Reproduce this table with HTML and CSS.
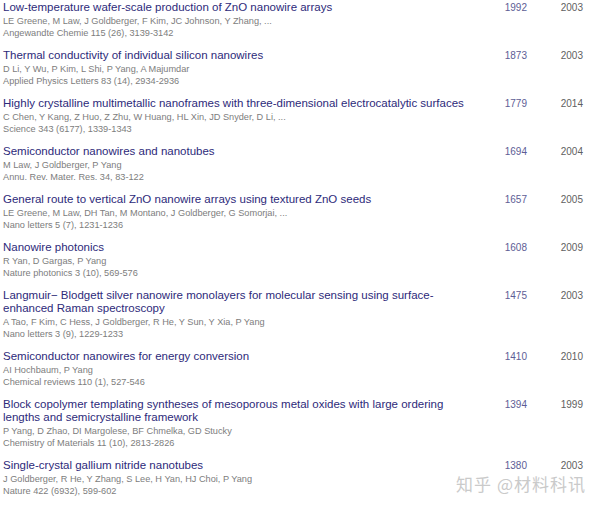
FILE: index.html
```html
<!DOCTYPE html>
<html lang="en">
<head>
    <meta charset="UTF-8">
    <title>Articles</title>
    <link rel="stylesheet" href="styles.css">
</head>
<body>
    <div class="article-list">
        <div class="row">
            <div class="item">
                <a href="#" class="title">Low-temperature wafer-scale production of ZnO nanowire arrays</a>
                <div class="meta">LE Greene, M Law, J Goldberger, F Kim, JC Johnson, Y Zhang, ...</div>
                <div class="meta">Angewandte Chemie 115 (26), 3139-3142</div>
            </div>
            <a href="#" class="cites">1992</a>
            <div class="year">2003</div>
        </div>
        <div class="row">
            <div class="item">
                <a href="#" class="title">Thermal conductivity of individual silicon nanowires</a>
                <div class="meta">D Li, Y Wu, P Kim, L Shi, P Yang, A Majumdar</div>
                <div class="meta">Applied Physics Letters 83 (14), 2934-2936</div>
            </div>
            <a href="#" class="cites">1873</a>
            <div class="year">2003</div>
        </div>
        <div class="row">
            <div class="item">
                <a href="#" class="title">Highly crystalline multimetallic nanoframes with three-dimensional electrocatalytic surfaces</a>
                <div class="meta">C Chen, Y Kang, Z Huo, Z Zhu, W Huang, HL Xin, JD Snyder, D Li, ...</div>
                <div class="meta">Science 343 (6177), 1339-1343</div>
            </div>
            <a href="#" class="cites">1779</a>
            <div class="year">2014</div>
        </div>
        <div class="row">
            <div class="item">
                <a href="#" class="title">Semiconductor nanowires and nanotubes</a>
                <div class="meta">M Law, J Goldberger, P Yang</div>
                <div class="meta">Annu. Rev. Mater. Res. 34, 83-122</div>
            </div>
            <a href="#" class="cites">1694</a>
            <div class="year">2004</div>
        </div>
        <div class="row">
            <div class="item">
                <a href="#" class="title">General route to vertical ZnO nanowire arrays using textured ZnO seeds</a>
                <div class="meta">LE Greene, M Law, DH Tan, M Montano, J Goldberger, G Somorjai, ...</div>
                <div class="meta">Nano letters 5 (7), 1231-1236</div>
            </div>
            <a href="#" class="cites">1657</a>
            <div class="year">2005</div>
        </div>
        <div class="row">
            <div class="item">
                <a href="#" class="title">Nanowire photonics</a>
                <div class="meta">R Yan, D Gargas, P Yang</div>
                <div class="meta">Nature photonics 3 (10), 569-576</div>
            </div>
            <a href="#" class="cites">1608</a>
            <div class="year">2009</div>
        </div>
        <div class="row">
            <div class="item">
                <a href="#" class="title">Langmuir− Blodgett silver nanowire monolayers for molecular sensing using surface-enhanced Raman spectroscopy</a>
                <div class="meta">A Tao, F Kim, C Hess, J Goldberger, R He, Y Sun, Y Xia, P Yang</div>
                <div class="meta">Nano letters 3 (9), 1229-1233</div>
            </div>
            <a href="#" class="cites">1475</a>
            <div class="year">2003</div>
        </div>
        <div class="row">
            <div class="item">
                <a href="#" class="title">Semiconductor nanowires for energy conversion</a>
                <div class="meta">AI Hochbaum, P Yang</div>
                <div class="meta">Chemical reviews 110 (1), 527-546</div>
            </div>
            <a href="#" class="cites">1410</a>
            <div class="year">2010</div>
        </div>
        <div class="row">
            <div class="item">
                <a href="#" class="title">Block copolymer templating syntheses of mesoporous metal oxides with large ordering lengths and semicrystalline framework</a>
                <div class="meta">P Yang, D Zhao, DI Margolese, BF Chmelka, GD Stucky</div>
                <div class="meta">Chemistry of Materials 11 (10), 2813-2826</div>
            </div>
            <a href="#" class="cites">1394</a>
            <div class="year">1999</div>
        </div>
        <div class="row">
            <div class="item">
                <a href="#" class="title">Single-crystal gallium nitride nanotubes</a>
                <div class="meta">J Goldberger, R He, Y Zhang, S Lee, H Yan, HJ Choi, P Yang</div>
                <div class="meta">Nature 422 (6932), 599-602</div>
            </div>
            <a href="#" class="cites">1380</a>
            <div class="year">2003</div>
        </div>
    </div>

    <div class="watermark">知乎 @材料科讯</div>
</body>
</html>
```

FILE: styles.css
```css
body {
    font-family: "Liberation Sans", Arial, sans-serif;
    background-color: #fff;
    margin: 0;
    padding: 1px 0 0 3px;
    position: relative;
    height: 506px;
    box-sizing: border-box;
    overflow: hidden;
}

.article-list {
    display: flex;
    flex-direction: column;
}

.row {
    display: grid;
    grid-template-columns: 466px 58px 56px;
    align-items: start;
    padding-bottom: 10px;
}

.title {
    display: block;
    font-size: 11.5px;
    line-height: 13px;
    margin-bottom: 1px;
    color: #2d2a7a;
    text-decoration: none;
}

.meta {
    font-size: 9.2px;
    line-height: 12px;
    color: #7d7d7d;
}

.cites,
.year {
    font-size: 10px;
    line-height: 14px;
    text-align: right;
    text-decoration: none;
}

.cites {
    color: #5d5d95;
}

.year {
    color: #5f5f5f;
}

.watermark {
    position: absolute;
    right: 14px;
    bottom: 10px;
    font-family: "Noto Sans CJK SC", sans-serif;
    font-size: 17px;
    letter-spacing: 1px;
    color: #cacaca;
    text-shadow: 0 0 2px #fff;
}
```
